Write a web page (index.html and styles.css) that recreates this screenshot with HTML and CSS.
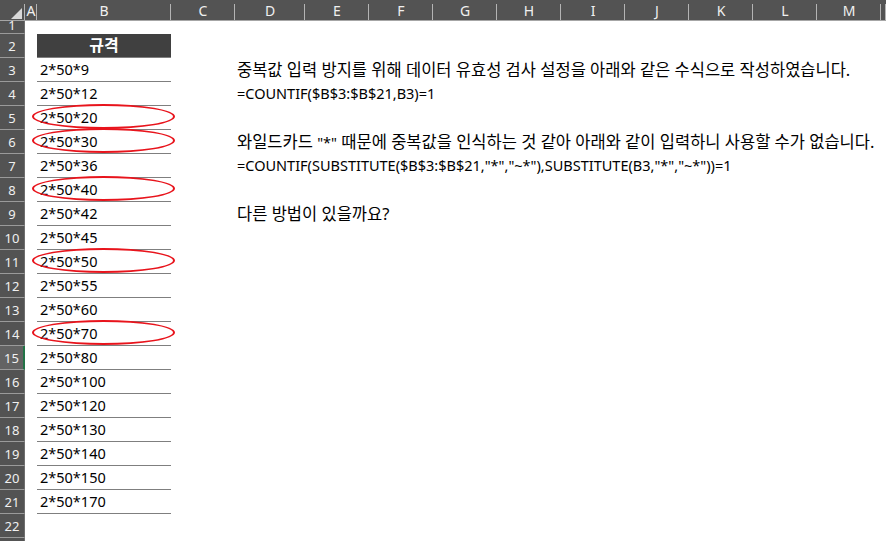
FILE: index.html
```html
<!DOCTYPE html>
<html lang="ko">
<head>
    <meta charset="UTF-8">
    <title>중복값 입력 방지</title>
    <link rel="stylesheet" href="styles.css">
</head>
<body>
    <div class="sheet">
        <div class="col-heads">
            <div class="corner"><span class="select-all"></span></div>
            <div class="ch">A</div>
            <div class="ch">B</div>
            <div class="ch">C</div>
            <div class="ch">D</div>
            <div class="ch">E</div>
            <div class="ch">F</div>
            <div class="ch">G</div>
            <div class="ch">H</div>
            <div class="ch">I</div>
            <div class="ch">J</div>
            <div class="ch">K</div>
            <div class="ch">L</div>
            <div class="ch">M</div>
            <div class="ch"></div>
        </div>

        <div class="row short"><div class="rh">1</div></div>
        <div class="row"><div class="rh">2</div><div class="cell head">규격</div></div>
        <div class="row"><div class="rh">3</div><div class="cell">2*50*9</div><div class="note ko">중복값 입력 방지를 위해 데이터 유효성 검사 설정을 아래와 같은 수식으로 작성하였습니다.</div></div>
        <div class="row"><div class="rh">4</div><div class="cell">2*50*12</div><div class="note">=COUNTIF($B$3:$B$21,B3)=1</div></div>
        <div class="row"><div class="rh">5</div><div class="cell circled">2*50*20</div></div>
        <div class="row"><div class="rh">6</div><div class="cell circled">2*50*30</div><div class="note ko">와일드카드 <span class="latin">"*"</span> 때문에 중복값을 인식하는 것 같아 아래와 같이 입력하니 사용할 수가 없습니다.</div></div>
        <div class="row"><div class="rh">7</div><div class="cell">2*50*36</div><div class="note">=COUNTIF(SUBSTITUTE($B$3:$B$21,"*","~*"),SUBSTITUTE(B3,"*","~*"))=1</div></div>
        <div class="row"><div class="rh">8</div><div class="cell circled">2*50*40</div></div>
        <div class="row"><div class="rh">9</div><div class="cell">2*50*42</div><div class="note ko">다른 방법이 있을까요?</div></div>
        <div class="row"><div class="rh">10</div><div class="cell">2*50*45</div></div>
        <div class="row"><div class="rh">11</div><div class="cell circled">2*50*50</div></div>
        <div class="row"><div class="rh">12</div><div class="cell">2*50*55</div></div>
        <div class="row"><div class="rh">13</div><div class="cell">2*50*60</div></div>
        <div class="row"><div class="rh">14</div><div class="cell circled">2*50*70</div></div>
        <div class="row"><div class="rh active">15</div><div class="cell">2*50*80</div></div>
        <div class="row"><div class="rh">16</div><div class="cell">2*50*100</div></div>
        <div class="row"><div class="rh">17</div><div class="cell">2*50*120</div></div>
        <div class="row"><div class="rh">18</div><div class="cell">2*50*130</div></div>
        <div class="row"><div class="rh">19</div><div class="cell">2*50*140</div></div>
        <div class="row"><div class="rh">20</div><div class="cell">2*50*150</div></div>
        <div class="row"><div class="rh">21</div><div class="cell">2*50*170</div></div>
        <div class="row"><div class="rh">22</div></div>
        <div class="row"><div class="rh">23</div></div>
    </div>
</body>
</html>
```

FILE: styles.css
```css
* {
    margin: 0;
    padding: 0;
    box-sizing: border-box;
}

body {
    font-family: 'Noto Sans', 'Noto Sans CJK KR', sans-serif;
    background: #fff;
    color: #000;
    overflow: hidden;
}

.sheet {
    width: 886px;
    height: 541px;
    overflow: hidden;
}

/* column headers */
.col-heads {
    display: grid;
    grid-template-columns: 25px 12px 134px 64px 70px repeat(9, 64px) 1fr;
    height: 21px;
    background: #535353;
    border-bottom: 1px solid #a6a6a6;
}

.ch,
.corner {
    position: relative;
    color: #f0f0f0;
    font-size: 14px;
    line-height: 22px;
    text-align: center;
    background: linear-gradient(#b4b4b4, #b4b4b4) right 4px / 1px 16px no-repeat;
}

.select-all {
    position: absolute;
    right: 3px;
    bottom: 3px;
    width: 0;
    height: 0;
    border-left: 11px solid transparent;
    border-bottom: 11px solid #d9d9d9;
}

/* rows */
.row {
    display: grid;
    grid-template-columns: 25px 12px 134px 64px 1fr;
    height: 24px;
}

.row.short {
    height: 13px;
}

.rh {
    grid-column: 1;
    background: #535353;
    color: #f0f0f0;
    font-size: 13px;
    line-height: 24px;
    text-align: center;
    border-bottom: 1px solid #9a9a9a;
    border-right: 1px solid #6e6e6e;
    overflow: hidden;
}

.short .rh {
    line-height: 8px;
}

.rh.active {
    background: #636363;
    border-right: 2px solid #217346;
}

.cell {
    grid-column: 3;
    position: relative;
    font-size: 14.5px;
    line-height: 23px;
    padding-left: 3px;
    border-bottom: 1px solid #7f7f7f;
    white-space: nowrap;
}

.cell.head {
    background: #404040;
    color: #fff;
    font-size: 16px;
    font-weight: bold;
    text-align: center;
    padding-left: 0;
}

.cell.circled::after {
    content: '';
    position: absolute;
    left: -5px;
    right: -4px;
    top: -2px;
    bottom: 0;
    border: 2px solid #e8141c;
    border-radius: 50%;
}

.note {
    grid-column: 5;
    font-size: 14.5px;
    line-height: 23px;
    padding-left: 2px;
    white-space: nowrap;
}

.note.ko {
    font-size: 16.5px;
}

.note .latin {
    font-size: 14.5px;
}
```
